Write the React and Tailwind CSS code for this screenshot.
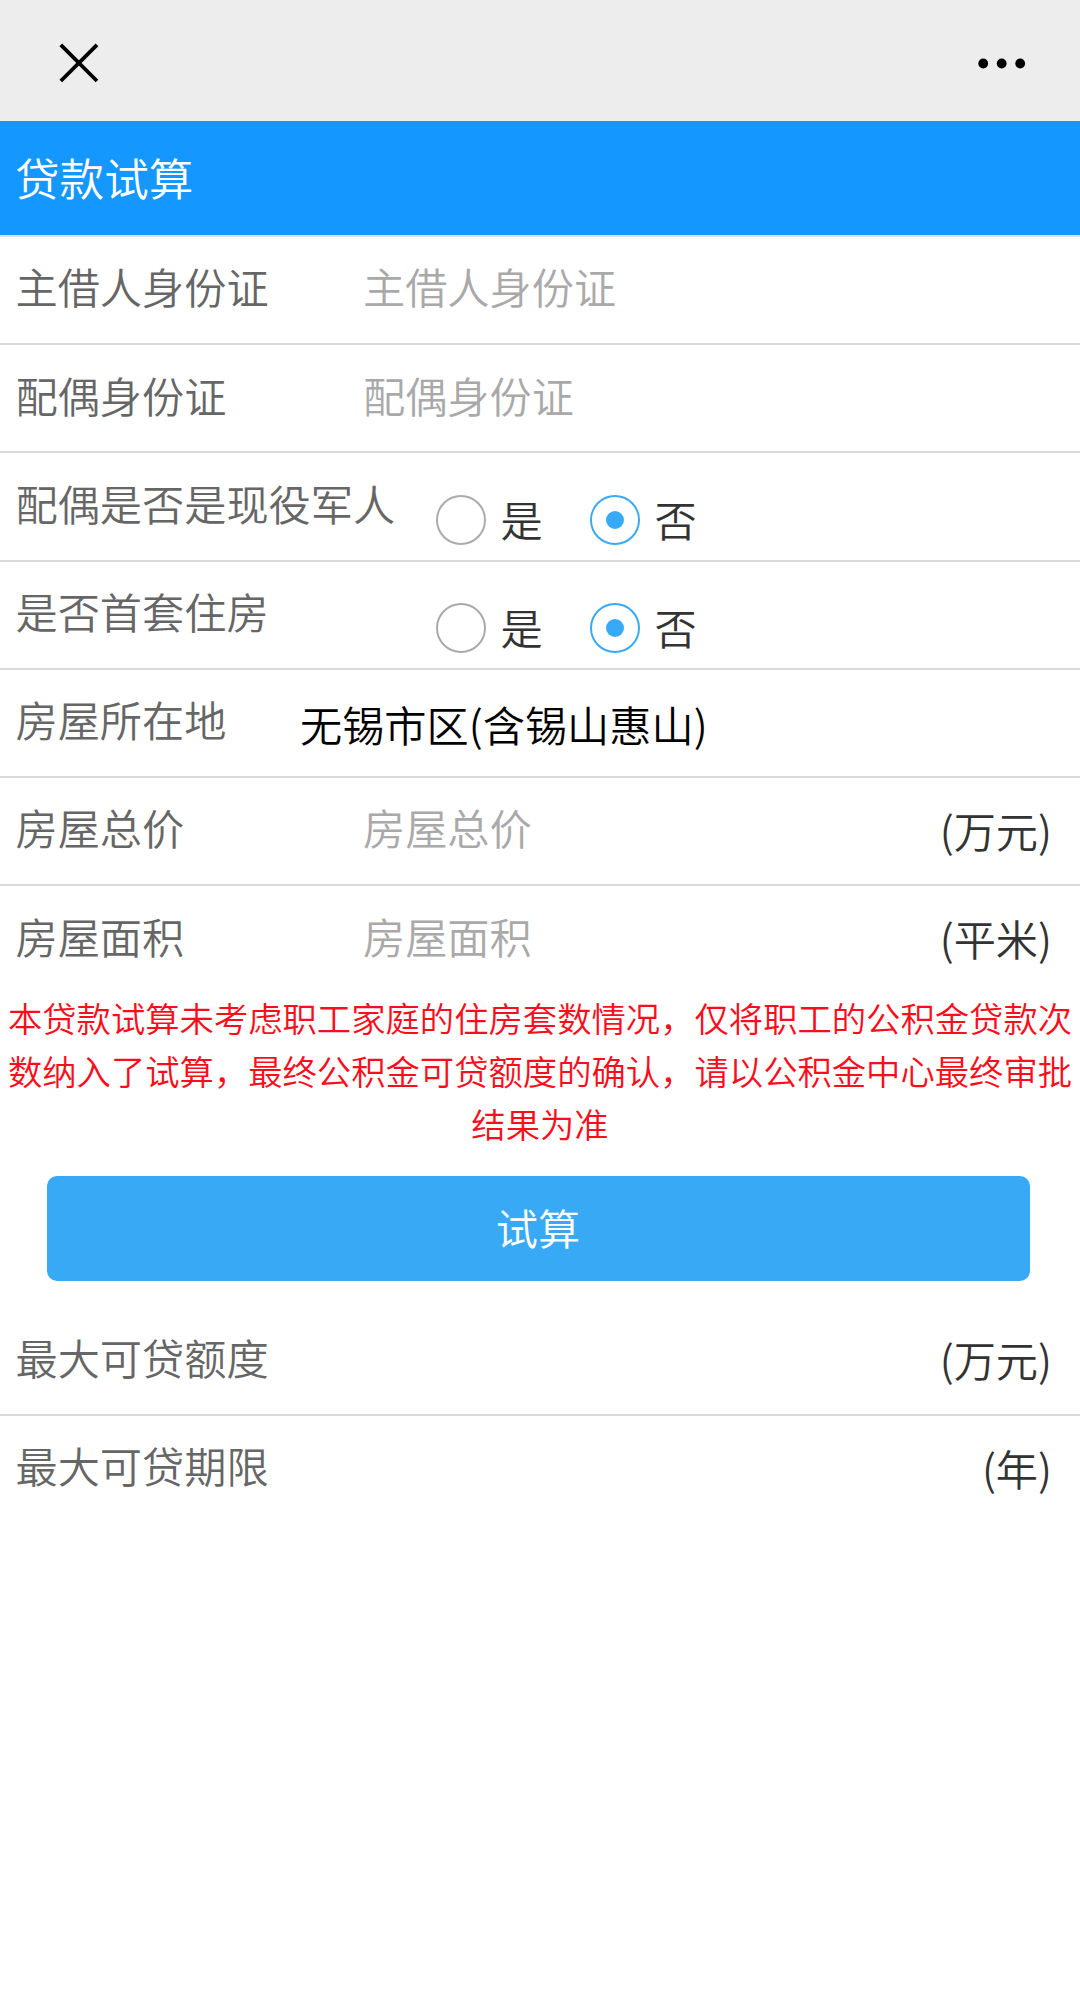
import { useState } from "react";

function Row({ label, children, last }) {
  return (
    <div
      className={`flex h-[108.2px] items-start ${
        last ? "" : "border-b-2 border-[#d9d9d9]"
      }`}
    >
      <div className="w-[364px] shrink-0 pl-[15.5px] pt-[17.4px] leading-[64px] whitespace-nowrap text-[#666]">
        {label}
      </div>
      {children}
    </div>
  );
}

function Field({ label, unit, last }) {
  const [value, setValue] = useState("");

  return (
    <Row label={label} last={last}>
      <input
        value={value}
        onChange={(e) => setValue(e.target.value)}
        placeholder={label}
        className="-ml-px mt-[17.4px] h-[64px] w-[420px] leading-[64px] text-[#333] outline-none placeholder:text-[#a9a9a9]"
      />
      {unit && <Unit>{unit}</Unit>}
    </Row>
  );
}

function Unit({ children }) {
  return (
    <span className="ml-auto pr-[28px] pt-[20px] leading-[64px] text-[#333]">
      {children}
    </span>
  );
}

function Radio({ checked, onClick, children }) {
  return (
    <button
      onClick={onClick}
      className="flex w-[154px] items-center text-left text-[#333]"
    >
      <span
        className={`mr-[15px] flex size-[50px] items-center justify-center rounded-full border-2 ${
          checked ? "border-[#38aaf5]" : "border-[#aaa]"
        }`}
      >
        {checked && <span className="size-[18px] rounded-full bg-[#38aaf5]" />}
      </span>
      <span className="pb-[3px] leading-[61px]">{children}</span>
    </button>
  );
}

function YesNo({ label }) {
  const [value, setValue] = useState(false);

  return (
    <Row label={label}>
      <div className="ml-[71.5px] flex pt-[34.4px]">
        <Radio checked={value} onClick={() => setValue(true)}>
          是
        </Radio>
        <Radio checked={!value} onClick={() => setValue(false)}>
          否
        </Radio>
      </div>
    </Row>
  );
}

export default function App() {
  return (
    <div className="min-h-[2010px] w-[1080px] bg-white font-['Noto_Sans_CJK_SC',sans-serif] text-[42.2px] font-[350]">
      <div className="flex h-[121px] items-center justify-between bg-[#ededed] pt-[5px] pr-[54px] pl-[59px]">
        <svg width="40" height="40" viewBox="0 0 40 40">
          <path d="M1.8 1.8 38 38M38 1.8 1.8 38" stroke="#000" strokeWidth="3.8" />
        </svg>
        <svg width="48" height="11" viewBox="0 0 48 11">
          <circle cx="5.2" cy="5.5" r="4.9" />
          <circle cx="23.7" cy="5.5" r="4.9" />
          <circle cx="42.2" cy="5.5" r="4.9" />
        </svg>
      </div>

      <h1 className="h-[116px] border-b-2 border-[#d5e3f2] bg-[#1497ff] pt-[24px] pl-[15px] text-[44.6px] leading-[64px] font-[350] text-white">
        贷款试算
      </h1>

      <Field label="主借人身份证" />
      <Field label="配偶身份证" />
      <YesNo label="配偶是否是现役军人" />
      <YesNo label="是否首套住房" />
      <Row label="房屋所在地">
        <span className="-ml-[64px] pt-[22px] leading-[64px] text-black">
          无锡市区(含锡山惠山)
        </span>
      </Row>
      <Field label="房屋总价" unit="(万元)" />
      <Field label="房屋面积" unit="(平米)" last />

      <p className="-mt-[3px] px-[7px] text-center text-[34.35px] leading-[52.6px] text-[#fc0d1b]">
        本贷款试算未考虑职工家庭的住房套数情况，仅将职工的公积金贷款次数纳入了试算，最终公积金可贷额度的确认，请以公积金中心最终审批结果为准
      </p>

      <button className="mt-[27.4px] ml-[46.5px] block h-[105px] w-[983px] rounded-[10px] bg-[#38aaf5] pb-[4px] text-white">
        试算
      </button>

      <div className="mt-[26px]">
        <Row label="最大可贷额度">
          <Unit>(万元)</Unit>
        </Row>
        <Row label="最大可贷期限" last>
          <Unit>(年)</Unit>
        </Row>
      </div>
    </div>
  );
}
